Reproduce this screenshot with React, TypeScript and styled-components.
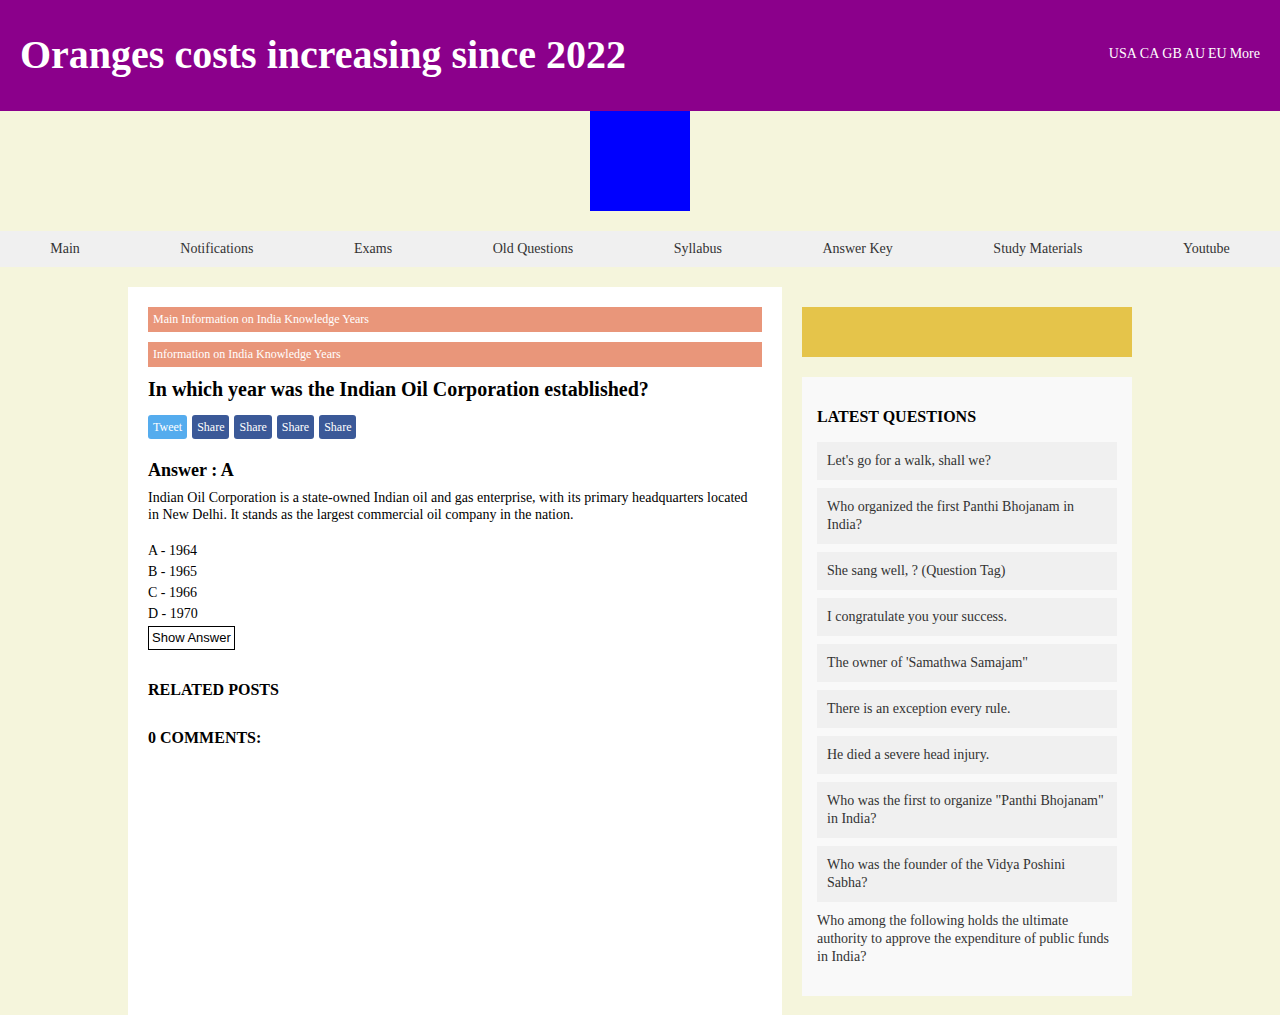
import React from "react";
import styled, { createGlobalStyle } from "styled-components";

const Global = createGlobalStyle`
  html, body { margin: 0; padding: 0; }
  body {
    background: #f5f5dc;
    font-family: "Liberation Serif", "Times New Roman", serif;
    color: #000;
  }
`;

const Header = styled.header`
  background: #8b008b;
  height: 111px;
  display: flex;
  align-items: center;
  justify-content: space-between;
  padding: 0 20px;
  box-sizing: border-box;
  color: #fff;
`;

const Title = styled.h1`
  margin: 0;
  font-size: 40px;
  font-weight: bold;
  padding-bottom: 2px;
`;

const Regions = styled.nav`
  display: flex;
  gap: 3px;
  font-size: 14px;
  padding-bottom: 4px;
`;

const Region = styled.span`
  color: #fff;
`;

const LogoRow = styled.div`
  display: flex;
  justify-content: center;
  margin-bottom: 20px;
`;

const Logo = styled.div`
  width: 100px;
  height: 100px;
  background: #0000ff;
`;

const MenuBar = styled.nav`
  background: #f0f0f0;
  height: 36px;
  display: flex;
  align-items: center;
  justify-content: space-around;
`;

const MenuLink = styled.a`
  font-size: 14px;
  color: #333;
  text-decoration: none;
`;

const Layout = styled.div`
  display: flex;
  align-items: flex-start;
  gap: 20px;
  padding: 20px 0 0 128px;
`;

const Article = styled.main`
  width: 654px;
  min-height: 760px;
  background: #fff;
  padding: 20px;
  box-sizing: border-box;
`;

const Crumb = styled.div`
  background: #e9967a;
  color: #fff;
  font-size: 12px;
  height: 25px;
  line-height: 25px;
  padding: 0 5px;
  margin-bottom: 10px;
`;

const Question = styled.h2`
  margin: 0 0 14px;
  font-size: 20px;
  line-height: 24px;
`;

const ShareRow = styled.div`
  display: flex;
  gap: 5px;
  margin-bottom: 20px;
`;

const ShareButton = styled.span<{ $tweet?: boolean }>`
  background: ${(p) => (p.$tweet ? "#55acee" : "#3b5998")};
  color: #fff;
  font-size: 12px;
  height: 24px;
  line-height: 24px;
  padding: 0 5px;
  border-radius: 3px;
`;

const AnswerTitle = styled.h3`
  margin: 0 0 8px;
  font-size: 18px;
  line-height: 22px;
`;

const Explanation = styled.p`
  margin: 0 0 17px;
  padding-right: 10px;
  font-size: 14px;
  line-height: 17px;
`;

const Options = styled.div`
  display: flex;
  flex-direction: column;
  font-size: 14px;
  line-height: 21px;
`;

const ShowButton = styled.button`
  align-self: flex-start;
  margin-top: 2px;
  font-family: "Liberation Sans", Arial, sans-serif;
  font-size: 13px;
  line-height: 16px;
  background: #fff;
  border: 1px solid #000;
  padding: 3px 3px;
  color: #000;
`;

const SectionHead = styled.h4<{ $top: number }>`
  margin: ${(p) => p.$top}px 0 0;
  font-size: 16px;
  line-height: 18px;
`;

const Sidebar = styled.aside`
  width: 330px;
  display: flex;
  flex-direction: column;
  gap: 20px;
  padding-top: 20px;
`;

const AdBox = styled.div`
  height: 50px;
  background: #e5c44a;
`;

const Widget = styled.section`
  background: #f9f9f9;
  padding: 31px 15px 30px;
`;

const WidgetTitle = styled.h3`
  margin: 0 0 16px;
  font-size: 16px;
  line-height: 18px;
`;

const QList = styled.div`
  display: flex;
  flex-direction: column;
  gap: 8px;
`;

const QItem = styled.div<{ $plain?: boolean }>`
  background: ${(p) => (p.$plain ? "transparent" : "#f0f0f0")};
  padding: ${(p) => (p.$plain ? "2px 0 0" : "10px")};
  font-size: 14px;
  line-height: 18px;
  color: #333;
`;

const regions = ["USA", "CA", "GB", "AU", "EU", "More"];
const menu = [
  "Main",
  "Notifications",
  "Exams",
  "Old Questions",
  "Syllabus",
  "Answer Key",
  "Study Materials",
  "Youtube",
];
const questions = [
  "Let's go for a walk, shall we?",
  "Who organized the first Panthi Bhojanam in India?",
  "She sang well, ? (Question Tag)",
  "I congratulate you your success.",
  "The owner of 'Samathwa Samajam\"",
  "There is an exception every rule.",
  "He died a severe head injury.",
  "Who was the first to organize \"Panthi Bhojanam\" in India?",
  "Who was the founder of the Vidya Poshini Sabha?",
];

export default function App() {
  return (
    <>
      <Global />
      <Header>
        <Title>Oranges costs increasing since 2022</Title>
        <Regions>
          {regions.map((r) => (
            <Region key={r}>{r}</Region>
          ))}
        </Regions>
      </Header>
      <LogoRow>
        <Logo />
      </LogoRow>
      <MenuBar>
        {menu.map((m) => (
          <MenuLink key={m} href="#">
            {m}
          </MenuLink>
        ))}
      </MenuBar>
      <Layout>
        <Article>
          <Crumb>Main Information on India Knowledge Years</Crumb>
          <Crumb>Information on India Knowledge Years</Crumb>
          <Question>In which year was the Indian Oil Corporation established?</Question>
          <ShareRow>
            <ShareButton $tweet>Tweet</ShareButton>
            <ShareButton>Share</ShareButton>
            <ShareButton>Share</ShareButton>
            <ShareButton>Share</ShareButton>
            <ShareButton>Share</ShareButton>
          </ShareRow>
          <AnswerTitle>Answer : A</AnswerTitle>
          <Explanation>
            Indian Oil Corporation is a state-owned Indian oil and gas enterprise, with its primary
            headquarters located in New Delhi. It stands as the largest commercial oil company in the
            nation.
          </Explanation>
          <Options>
            <span>A - 1964</span>
            <span>B - 1965</span>
            <span>C - 1966</span>
            <span>D - 1970</span>
            <ShowButton>Show Answer</ShowButton>
          </Options>
          <SectionHead $top={31}>RELATED POSTS</SectionHead>
          <SectionHead $top={30}>0 COMMENTS:</SectionHead>
        </Article>
        <Sidebar>
          <AdBox />
          <Widget>
            <WidgetTitle>LATEST QUESTIONS</WidgetTitle>
            <QList>
              {questions.map((q) => (
                <QItem key={q}>{q}</QItem>
              ))}
              <QItem $plain>
                Who among the following holds the ultimate authority to approve the expenditure of
                public funds in India?
              </QItem>
            </QList>
          </Widget>
        </Sidebar>
      </Layout>
    </>
  );
}
